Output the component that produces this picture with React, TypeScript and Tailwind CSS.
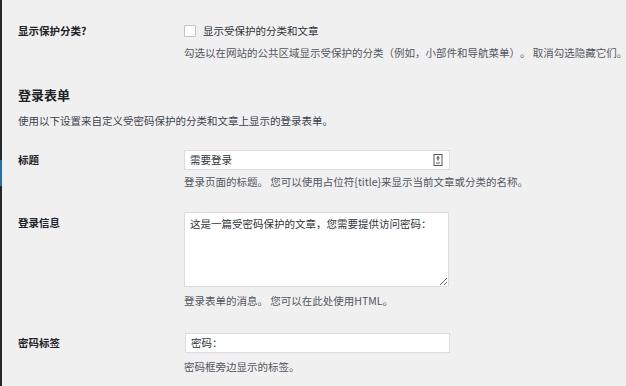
import React from "react";

const font = { fontFamily: '"Noto Sans CJK SC", "Noto Sans", sans-serif' };

function KeyIcon() {
  return (
    <svg width="10" height="12" viewBox="0 0 10 12" className="shrink-0">
      <rect x="1" y="0.5" width="8" height="11" fill="none" stroke="#50575e" strokeWidth="1" />
      <path d="M5 2.5 L5 6.5" stroke="#50575e" strokeWidth="1.4" />
      <path d="M3 9 L7 9" stroke="#50575e" strokeWidth="1" />
      <path d="M3.5 4.5 L5 2.5 L6.5 4.5" fill="none" stroke="#50575e" strokeWidth="0.8" />
    </svg>
  );
}

export default function App() {
  return (
    <div className="w-[626px] h-[386px] overflow-hidden bg-[#f0f0f0] flex text-[10.5px] [text-spacing-trim:space-all]" style={font}>
      <div className="w-[2px] flex flex-col shrink-0">
        <div className="h-[160px] bg-[#23282d]" />
        <div className="h-[26px] bg-[#2271b1]" />
        <div className="flex-1 bg-[#23282d]" />
      </div>
      <div className="flex-1 pl-[16px] pt-[23px] flex flex-col">
        {/* Row 1 */}
        <div className="flex">
          <div className="w-[166px] shrink-0 font-bold text-[#1d2327] leading-[16px]">显示保护分类?</div>
          <div className="flex flex-col">
            <div className="flex items-center h-[16px] gap-[7px]">
              <span className="w-[12px] h-[12px] bg-white border border-[#c3c4c7] rounded-[1px] shrink-0" />
              <span className="text-[#2c3338] leading-[16px]">显示受保护的分类和文章</span>
            </div>
            <div className="mt-[6px] leading-[16px] text-[#50575e] whitespace-nowrap">
              勾选以在网站的公共区域显示受保护的分类（例如，小部件和导航菜单）。 取消勾选隐藏它们。
            </div>
          </div>
        </div>

        {/* Heading */}
        <div className="mt-[24px] text-[13px] font-bold leading-[20px] text-[#1d2327]">登录表单</div>
        <div className="mt-[8px] leading-[16px] text-[#3c434a]">使用以下设置来自定义受密码保护的分类和文章上显示的登录表单。</div>

        {/* 标题 */}
        <div className="flex mt-[21px]">
          <div className="w-[166px] shrink-0 font-bold text-[#1d2327] leading-[20px]">标题</div>
          <div className="flex flex-col">
            <div className="w-[266px] h-[20px] bg-white border border-[#dcdcde] flex items-center justify-between pl-[5px] pr-[6px] text-[#2c3338]">
              <span className="leading-[16px]">需要登录</span>
              <KeyIcon />
            </div>
            <div className="mt-[4px] leading-[16px] text-[#50575e] whitespace-nowrap">
              登录页面的标题。 您可以使用占位符{"{title}"}来显示当前文章或分类的名称。
            </div>
          </div>
        </div>

        {/* 登录信息 */}
        <div className="flex mt-[22px]">
          <div className="w-[166px] shrink-0 font-bold text-[#1d2327] leading-[22px]">登录信息</div>
          <div className="flex flex-col">
            <textarea
              readOnly
              value="这是一篇受密码保护的文章，您需要提供访问密码："
              className="w-[265px] h-[75px] bg-white border border-[#dcdcde] px-[5px] py-[3px] text-[#2c3338] leading-[16px] outline-none [text-spacing-trim:space-all]"
              style={font}
            />
            <div className="mt-[6px] leading-[16px] text-[#50575e] whitespace-nowrap">登录表单的消息。 您可以在此处使用HTML。</div>
          </div>
        </div>

        {/* 密码标签 */}
        <div className="flex mt-[24px]">
          <div className="w-[166px] shrink-0 font-bold text-[#1d2327] leading-[20px]">密码标签</div>
          <div className="flex flex-col">
            <div className="w-[265px] h-[20px] bg-white border border-[#dcdcde] flex items-center pl-[5px] text-[#2c3338] ml-[1px]">
              <span className="leading-[16px]">密码：</span>
            </div>
            <div className="mt-[6px] leading-[16px] text-[#50575e] whitespace-nowrap">密码框旁边显示的标签。</div>
          </div>
        </div>
      </div>
    </div>
  );
}
